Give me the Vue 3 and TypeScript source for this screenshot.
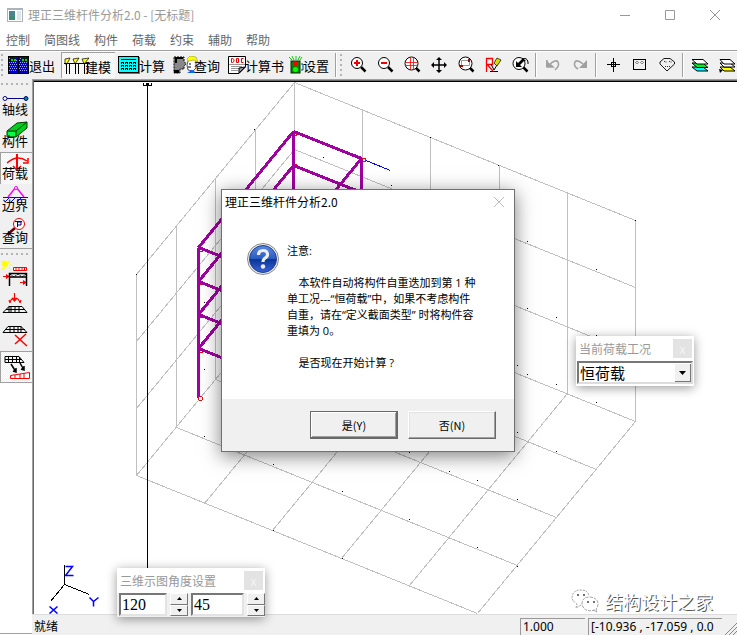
<script setup lang="ts">
import { ref } from 'vue'

type Point = [number, number]
interface Segment { x1: number; y1: number; x2: number; y2: number }

const loadCase = ref('恒荷载')
const angleA = ref(120)
const angleB = ref(45)
const dialogOpen = ref(true)
const menus = ['控制', '简图线', '构件', '荷载', '约束', '辅助', '帮助']

/* Projected box of the axis grid: origin corner plus three edge vectors. */
const origin: Point = [294, 82]
const right: Point = [341, 138]
const left: Point = [-158, 192]
const drop = 201

function seg(a: Point, b: Point): Segment {
  return { x1: a[0], y1: a[1], x2: b[0], y2: b[1] }
}
function at(u: number, v: number, w: number): Point {
  return [
    Math.round(origin[0] + right[0] * u + left[0] * v),
    Math.round(origin[1] + right[1] * u + left[1] * v + drop * w),
  ]
}

const grid: Segment[] = []
for (let i = 0; i <= 5; i++) {
  grid.push(seg(at(i / 5, 0, 0), at(i / 5, 0, 1)), seg(at(i / 5, 0, 1), at(i / 5, 1, 1)))
}
for (let j = 0; j <= 4; j++) {
  grid.push(seg(at(0, j / 4, 0), at(0, j / 4, 1)), seg(at(0, j / 4, 1), at(1, j / 4, 1)))
}
for (let k = 0; k < 3; k++) {
  grid.push(seg(at(0, 0, k / 3), at(1, 0, k / 3)), seg(at(0, 0, k / 3), at(0, 1, k / 3)))
}

const backCol: Point = [293, 131]
const rightCol: Point = [361, 158]
const leftCol: Point = [198, 247]
const frontCol: Point = [266, 274]
const down = (p: Point, d: number): Point => [p[0], p[1] + d]
const frame: Segment[] = [backCol, rightCol, leftCol, frontCol].map(p => seg(p, down(p, 150)))
for (const d of [0, 34, 67, 101]) {
  frame.push(
    seg(down(backCol, d), down(rightCol, d)),
    seg(down(backCol, d), down(leftCol, d)),
    seg(down(leftCol, d), down(frontCol, d)),
    seg(down(rightCol, d), down(frontCol, d)),
  )
}

const dots: Point[] = [
  [254, 129], [323, 157], [391, 185], [430, 137], [498, 165], [635, 220], [527, 241], [596, 269],
  [527, 308], [556, 317], [596, 335], [517, 365], [527, 374], [556, 384], [596, 402], [517, 432],
  [556, 451], [409, 452], [449, 471], [477, 480], [517, 499], [409, 519], [342, 491], [273, 464],
  [204, 436], [204, 369], [204, 302], [477, 547], [517, 566], [273, 530], [342, 558], [136, 274],
]
const joints: Point[] = [[200, 249], [200, 282], [200, 315], [200, 350], [294, 133], [294, 165], [363, 159]]

const message = `    本软件自动将构件自重迭加到第 1 种
单工况---“恒荷载”中，如果不考虑构件
自重，请在“定义截面类型” 时将构件容
重填为 0。

    是否现在开始计算 ?`
</script>

<template>
  <div class="window">
    <header class="titlebar">
      <svg class="app-icon" width="16" height="14" viewBox="0 0 16 14" shape-rendering="crispEdges">
        <rect x="0" y="0" width="16" height="14" fill="#a9b5bb" />
        <rect x="1" y="2" width="14" height="11" fill="#fff" />
        <rect x="2" y="3" width="6" height="9" fill="#4d8290" />
        <rect x="2" y="8" width="6" height="4" fill="#3f8a70" />
        <rect x="10" y="3" width="4" height="9" fill="#dfe6ea" />
      </svg>
      <h1>理正三维杆件分析2.0 - [无标题]</h1>
      <button class="win-btn" aria-label="最小化"><svg width="12" height="12"><path d="M1 6.500H11" /></svg></button>
      <button class="win-btn" aria-label="最大化"><svg width="12" height="12"><path d="M1.500 1.500H10.500V10.500H1.500Z" /></svg></button>
      <button class="win-btn" aria-label="关闭"><svg width="12" height="12"><path d="M1 1L11 11M11 1L1 11" /></svg></button>
    </header>
    <nav class="menu">
      <a v-for="m in menus" :key="m" href="#">{{ m }}</a>
    </nav>

    <div class="toolbar">
      <i class="grip" />
      <div class="modes">
        <button class="mode">
          <svg width="22" height="18" shape-rendering="crispEdges">
            <rect width="21" height="18" fill="#0000c8" />
            <path d="M1 2.500h8M2 4.500h8M1 6.500h8M2 8.500h8M1 10.500h8M2 12.500h8M1 14.500h8M12 2.500h8M11 4.500h8M12 6.500h8M11 8.500h8M12 10.500h8M11 12.500h8M12 14.500h8" stroke="#a0a0ff" stroke-dasharray="1 1" />
            <path d="M2 2h6v4h-6zM13 2h6v4h-6z" fill="#002020" />
            <path d="M3 4h2M6 4h2M14 4h2M17 4h2" stroke="#0d0" stroke-width="2" />
            <path d="M10.500 0V18M.5 .5H20.500V17.500H.5Z" stroke="#000" fill="none" />
          </svg><span>退出</span>
        </button>
        <button class="mode pressed overlap">
          <svg width="26" height="18">
            <path d="M1 2L6 1L3 7L1 7ZM9 2L15 1L11 7ZM18 2L25 1L20 7Z" fill="#ff0" stroke="#000" stroke-width=".7" />
            <path d="M2.500 6V17M5.500 6V17M11.500 6V17M14.500 6V17M20.500 6V17M23.500 6V17M0 6.500H26" stroke="#000" shape-rendering="crispEdges" />
          </svg><span>建模</span>
        </button>
        <button class="mode close">
          <svg width="24" height="18" shape-rendering="crispEdges">
            <path d="M.5 .5H20.500V16.500H.5Z" fill="#0ff" stroke="#000" />
            <path d="M21.500 1V17.500H1" stroke="#00a0a8" fill="none" />
            <path d="M3 3.500H18" stroke="#000" />
            <path d="M3 7H18M3 10H18M3 13H18" stroke="#000" stroke-width="2" stroke-dasharray="3 1" />
            <path d="M4 7H18M4 10H18M4 13H18" stroke="#0ff" stroke-dasharray="1 3" />
          </svg><span>计算</span>
        </button>
        <button class="mode overlap">
          <svg width="26" height="18">
            <path d="M1 1H11V5L13 8L11 10V13H7V17H1Z" fill="#888" stroke="#000" stroke-dasharray="2 1" />
            <path d="M2 1H10V3H4V7H2ZM1 14H6V17H1Z" fill="#000" />
            <path d="M15 5L14 9L15 14L20 15L23 12V5" fill="#fff" stroke="#008" stroke-width=".7" />
            <path d="M14 3L17 0L23 1L25 6L21 4L15 5Z" fill="#ff0" stroke="#880" stroke-width=".5" />
            <path d="M16 8H18M15 11H18" stroke="#000" />
            <path d="M14 17L19 14L24 17" fill="#06f" />
          </svg><span>查询</span>
        </button>
        <button class="mode wide close">
          <svg width="20" height="18">
            <path d="M.5 .5H17.500V11L11 17.500H.5Z" fill="#fff" stroke="#000" />
            <path d="M3.500 2.500V6.500H4.500L6 5.500V3.500L4.500 2.500ZM8.500 2.500H10.500V6.500H8.500ZM15.500 2.500H13.500V6.500H15.500" fill="none" stroke="#e00" />
            <path d="M1 8.500H17M3 10.500H14M3 12.500H12M3 14.500H10" stroke="#999" shape-rendering="crispEdges" />
            <path d="M17 11L11 17V12Z" fill="#999" stroke="#000" />
          </svg><span>计算书</span>
        </button>
        <button class="mode narrow">
          <svg width="15" height="18">
            <path d="M3 4L0 1M5 4L3 0M7 4V0M9 4L11 0M11 4L13 1" stroke="#0c0" />
            <rect x="2" y="5" width="9" height="12" fill="#080" stroke="#003000" />
            <circle cx="6.500" cy="8" r="2.500" fill="#f00" /><circle cx="6.500" cy="13.500" r="2.500" fill="#0f0" />
            <path d="M12 8H14V14H12" stroke="#048" fill="none" />
          </svg><span>设置</span>
        </button>
      </div>
      <i class="sep" />
      <i class="grip second" />
      <div class="tools">
        <button aria-label="放大"><svg width="20" height="20"><path d="M13 12L17.500 16.500" stroke="#000" stroke-width="2.500" /><circle cx="9" cy="8" r="5.500" fill="#fff" stroke="#000" /><path d="M6 8H12M9 5V11" stroke="#e00" stroke-width="2" /></svg></button>
        <button aria-label="缩小"><svg width="20" height="20"><path d="M13 12L17.500 16.500" stroke="#000" stroke-width="2.500" /><circle cx="9" cy="8" r="5.500" fill="#fff" stroke="#000" /><path d="M6 8H12" stroke="#e00" stroke-width="2" /></svg></button>
        <button aria-label="全图"><svg width="20" height="20"><path d="M14 13L17.500 16.500" stroke="#000" stroke-width="2.500" /><circle cx="9.500" cy="8.500" r="6.500" fill="#fff" stroke="#000" /><path d="M3 7.500H16M3 10.500H16M8.500 2V15M11.500 2V15" stroke="#f00" stroke-width=".8" /></svg></button>
        <button aria-label="平移"><svg width="20" height="20"><path d="M10 3V17M3 10H17" stroke="#000" stroke-width="1.500" /><path d="M10 2L13 5H7ZM10 18L13 15H7ZM2 10L5 7V13ZM18 10L15 7V13Z" /></svg></button>
        <button aria-label="窗口缩放"><svg width="20" height="20"><path d="M14 13L17.500 16.500" stroke="#000" stroke-width="2.500" /><circle cx="9.500" cy="8.500" r="6.500" fill="#fff" stroke="#000" /><path d="M5.500 5.500H13.500V10.500H5.500Z" fill="none" stroke="#999" /><path d="M4 10H7V12H4ZM12 4H14V7H12Z" fill="#a00" /></svg></button>
        <button aria-label="重画"><svg width="20" height="20"><path d="M3.500 17V3.500H9.500V9.500H4L10 16" fill="none" stroke="#f00" stroke-width="1.300" /><path d="M8 9L11 15L17 5" stroke="#000" fill="none" /><path d="M11 8L14 3L18 5L14 11Z" fill="#dd0" stroke="#000" stroke-width=".7" /><path d="M7 16.500H15" stroke="#000" /></svg></button>
        <button aria-label="上一视图"><svg width="20" height="20"><path d="M13 12L17.500 16.500" stroke="#000" stroke-width="2.500" /><circle cx="9" cy="8.500" r="6" fill="#fff" stroke="#000" /><path d="M6 6V12H12L10 10L14 6H16L13 3L8 8Z" /><path d="M12 4Q17 2 18 7V9" fill="none" stroke="#000" /></svg></button>
        <i class="sep" />
        <button aria-label="撤销"><svg width="20" height="20"><path d="M4 5V12H10L7 9Q13 4 15 7Q17 11 12 15" fill="none" stroke="#a0a0a0" stroke-width="1.500" /><path d="M3 5V12H10Z" fill="#a0a0a0" /></svg></button>
        <button aria-label="重做"><svg width="20" height="20"><path d="M13 9Q7 4 5 7Q3 11 8 14" fill="none" stroke="#a0a0a0" stroke-width="1.500" /><path d="M17 5V13H9Z" fill="#a0a0a0" /></svg></button>
        <i class="sep" />
        <button aria-label="捕捉点"><svg width="20" height="20" shape-rendering="crispEdges"><path d="M10.500 3V17M4 9.500H17M8.500 7.500H12.500V11.500H8.500Z" fill="none" stroke="#000" /></svg></button>
        <button aria-label="平面"><svg width="20" height="20" shape-rendering="crispEdges"><path d="M3.500 4.500H15.500V14.500H3.500Z" fill="none" stroke="#000" /><path d="M6 6.500H8M5.500 7V8M8.500 7V8M6 8.500H8M11 6.500H13M10.500 7V8M13.500 7V8M11 8.500H13" fill="none" stroke="#888" /></svg></button>
        <button aria-label="多边形"><svg width="20" height="20"><path d="M3 7L7 3.500H13L17.500 7V9L10 16L3 9Z" fill="none" stroke="#000" stroke-width=".9" /><path d="M7 6.500H9V8M12 6.500H14V8M8 11.500H13" fill="none" stroke="#333" stroke-dasharray="1 1" /></svg></button>
        <i class="sep" />
        <button aria-label="图层"><svg width="20" height="20"><path d="M2 12L13 12L18 16H7Z" fill="#0ff" stroke="#000" /><path d="M2 8L13 8L18 12.500H7Z" fill="#0e2" stroke="#000" /><path d="M2 4.500H13L18 9H7Z" fill="#fff" stroke="#000" /></svg></button>
        <button aria-label="图层设置"><svg width="20" height="20"><path d="M3 12L13 12L18 16H7Z" fill="#ff0" stroke="#000" /><path d="M3 8L13 8L18 12H7Z" fill="#fff" stroke="#000" /><path d="M3 4.500H13L18 9H7Z" fill="#fff" stroke="#000" /><path d="M3 18L2 14L6 15Z" /></svg></button>
      </div>
    </div>

    <main class="workspace">
      <aside class="side">
        <div class="side-group">
          <i class="hgrip" />
          <button class="side-btn"><svg width="28" height="18"><path d="M5 9.500H24" stroke="#008" /><circle cx="4" cy="9.500" r="2" fill="#fff" stroke="#008" /><circle cx="25" cy="9.500" r="2" fill="#088" stroke="#008" /></svg><span>轴线</span></button>
          <button class="side-btn"><svg width="28" height="18"><path d="M6 10L16 2L26 1V7L15 16H6Z" fill="#0c2" stroke="#004000" /><path d="M6 10H15V16M15 10L26 1" fill="none" stroke="#004000" /><path d="M7 11H14V15H7Z" fill="#0f4" /></svg><span>构件</span></button>
          <button class="side-btn pressed"><svg width="28" height="18"><path d="M16 1V17" stroke="#f00" stroke-width="2" /><path d="M6 10Q16 1 26 8M22 10L27 10V5M12 13L16 17L20 13" fill="none" stroke="#f00" stroke-width="1.500" /></svg><span>荷载</span></button>
          <button class="side-btn"><svg width="28" height="18"><path d="M15 2L7 12M15 2L23 12" stroke="#f0f" stroke-width="1.500" /><circle cx="15" cy="3" r="1.500" fill="#fff" stroke="#f0f" /><path d="M2 12.500H27M4 17L8 13M10 17L14 13M16 17L20 13" stroke="#00f" /></svg><span>边界</span></button>
          <button class="side-btn"><svg width="28" height="18"><path d="M14 11L7 17" stroke="#600" stroke-width="2.500" /><circle cx="18" cy="7" r="5.500" fill="#fff" stroke="#e00" /><path d="M14 4.500H21M16.500 4V10M16 5H20V8H16" fill="none" stroke="#008" /></svg><span>查询</span></button>
        </div>
        <div class="side-group">
          <i class="hgrip" />
          <button class="side-icon" aria-label="节点荷载"><svg width="28" height="28"><path d="M4 0V4M9 1L7 3M0 2H3M8 5H11M8 8L10 10M4 7V10M0 10L3 7" stroke="#ff0" /><circle cx="4" cy="4" r="3" fill="#ff0" /><path d="M12.500 7.500H25.500V10.500H12.500ZM15 8V10M18 8V10M21 8V10M23.500 8V10" fill="#fff" stroke="#f00" /><path d="M2 16.500H8M19 22.500H25" stroke="#f00" /><path d="M5 14L9 16.500L5 19ZM22 20L26 22.500L22 25Z" fill="#f00" /><path d="M8.500 26V13.500H25.500V26M8 17H26" fill="none" stroke="#000" stroke-width="1.500" /><path d="M9 14L13 17L17 14L21 17L25 14" fill="none" stroke="#000" stroke-dasharray="2 1" /></svg></button>
          <button class="side-icon" aria-label="面荷载"><svg width="28" height="28"><path d="M13.500 2V10M9 12Q10 7 13.500 7Q18 7 19 12M11 7L13.500 10L16 7M8 9L9 12M20 9L19 12" fill="none" stroke="#f00" stroke-width="1.200" /><path d="M8 15.500H21L26 21.500H2ZM5 18.500H24M10 15V21M14 15V21M18 15V21M8 15V21" fill="none" stroke="#000" /></svg></button>
          <button class="side-icon" aria-label="删除荷载"><svg width="28" height="28"><path d="M7 4.500H20L26 10.500H2ZM5 7.500H24M9 4V10M13 4V10M17 4V10M20 4V10" fill="none" stroke="#000" /><path d="M14 13L26 24M25 12L14 22" stroke="#f00" stroke-width="1.500" /></svg></button>
          <button class="side-icon pressed" aria-label="荷载显示"><svg width="28" height="28"><path d="M3 3.500H17L22 9.500H3ZM6.500 3V9M10.500 3V9M14.500 3V9M17.500 4V9M3 6.500H20" fill="none" stroke="#000" /><path d="M9 11L14 19M18 10L22 17M11 18L14 19L14 15M19 16L22 17L22 13" fill="none" stroke="#000" stroke-width="1.500" /><path d="M8.500 25.500V22.500L27.500 19.500V25.500ZM13 25V22M18 25V21M22 25V20" fill="#fff" stroke="#f00" /></svg></button>
        </div>
      </aside>

      <section class="stage">
        <div class="canvas">
          <svg class="scene" shape-rendering="crispEdges">
            <g transform="translate(-33.5 -80.5)">
              <path d="M33 81H3000" stroke="#000" />
              <line v-for="(g, i) in grid" :key="'g' + i" v-bind="g" stroke="#c0c0c0" />
              <rect v-for="(d, i) in dots" :key="'d' + i" :x="d[0] - 0.5" :y="d[1] - 0.5" width="1" height="1" />
              <path d="M363 159L390 170" stroke="#00f" />
              <rect v-for="(j, i) in joints" :key="'j' + i" :x="j[0] - 1" :y="j[1] - 1" width="3" height="3" fill="#fff" stroke="#f00" />
              <line v-for="(f, i) in frame" :key="'f' + i" v-bind="f" stroke="#a000a0" stroke-width="3" />
              <circle cx="200" cy="398" r="2" fill="#fff" stroke="#f00" />
              <path d="M147 82V640M143 82V85H146V82M148 82V85H151V82" fill="none" stroke="#000" />
              <path d="M64 564V584L50 601M64 584L89 594" fill="none" stroke="#000" />
              <path d="M65 566H72L65 575H73M49 606L57 613M57 606L49 613M89 597L93 601L98 597M93 601V606" fill="none" stroke="#00f" stroke-width="1.500" shape-rendering="auto" />
            </g>
          </svg>

          <form class="palette load">
            <div class="palette-head"><label for="load-case">当前荷载工况</label><button type="button" aria-label="关闭">x</button></div>
            <div class="combo">
              <select id="load-case" v-model="loadCase"><option>恒荷载</option><option>活荷载</option></select>
              <svg width="17" height="19"><path d="M5 8H12L8.500 12Z" /></svg>
            </div>
          </form>

          <form class="palette angle">
            <div class="palette-head"><label for="angle-a">三维示图角度设置</label><button type="button" aria-label="关闭">x</button></div>
            <div class="fields">
              <input id="angle-a" v-model="angleA" type="text">
              <div class="spin">
                <button type="button" aria-label="增加第一角度" @click="angleA++"><svg width="5" height="3"><path d="M0 3H5L2.500 0Z" /></svg></button>
                <button type="button" aria-label="减少第一角度" @click="angleA--"><svg width="5" height="3"><path d="M0 0H5L2.500 3Z" /></svg></button>
              </div>
              <input v-model="angleB" class="second-angle" type="text" aria-label="第二角度">
              <div class="spin">
                <button type="button" aria-label="增加第二角度" @click="angleB++"><svg width="5" height="3"><path d="M0 3H5L2.500 0Z" /></svg></button>
                <button type="button" aria-label="减少第二角度" @click="angleB--"><svg width="5" height="3"><path d="M0 0H5L2.500 3Z" /></svg></button>
              </div>
            </div>
          </form>

          <div class="brand">
            <svg width="28" height="24" fill="none" stroke="#888" stroke-width=".8">
              <path d="M10 16L5 19L6 15Q1 12 1 8Q2 1 10 1Q17 1 18 7" stroke-dasharray="2 1" />
              <path d="M24 21Q13 24 11 15Q11 8 19 8Q27 9 27 15Q27 18 25 20L26 23L22 21" stroke-dasharray="3 1" />
              <path d="M6 6H8M12 6H14M16 13H18M22 13H24" stroke="#444" stroke-width="1.500" />
            </svg>
            <span>结构设计之家</span>
          </div>

          <div v-if="dialogOpen" class="dialog" role="dialog" aria-labelledby="dlg-title">
            <div class="dialog-head">
              <h2 id="dlg-title">理正三维杆件分析2.0</h2>
              <button aria-label="关闭对话框" @click="dialogOpen = false"><svg width="12" height="12"><path d="M1 1L11 11M11 1L1 11" stroke="#bbb" /></svg></button>
            </div>
            <div class="dialog-body">
              <svg width="32" height="32" viewBox="0 0 32 32">
                <defs><linearGradient id="ball" x2="0" y2="1"><stop offset="0" stop-color="#5c8ae0" /><stop offset=".48" stop-color="#2a5cc4" /><stop offset=".52" stop-color="#0b3595" /><stop offset="1" stop-color="#3a62dd" /></linearGradient></defs>
                <circle cx="16" cy="16" r="15.500" fill="#eee" stroke="#888" />
                <circle cx="16" cy="16" r="13.500" fill="url(#ball)" stroke="#1b3e90" />
                <path d="M11.500 12Q11.500 7.500 16 7.500Q20.500 7.500 20.500 11.500Q20.500 14 17.500 15.500Q16 16.500 16 19" fill="none" stroke="#eee" stroke-width="3.200" />
                <circle cx="16" cy="23.500" r="2.200" fill="#eee" />
              </svg>
              <div class="message"><p>注意:</p><p>{{ message }}</p></div>
            </div>
            <div class="dialog-foot">
              <button class="primary" @click="dialogOpen = false">是(Y)</button>
              <button @click="dialogOpen = false">否(N)</button>
            </div>
          </div>
        </div>

        <footer class="status">
          <span class="ready">就绪</span>
          <span class="cell scale">1.000</span>
          <span class="cell coords">[-10.936 , -17.059 , 0.0</span>
          <svg width="12" height="14"><path d="M0 14L12 2M4 14L12 6M8 14L12 10" stroke="#888" /></svg>
        </footer>
      </section>
    </main>
  </div>
</template>

<style>
body { background: #fff; }
</style>

<style scoped>
.window {
  display: flex;
  flex-direction: column;
  height: 100vh;
  overflow: hidden;
  background: #fff;
  color: #000;
  font: 12px/16px "Noto Sans CJK SC", sans-serif;
}
.window * { box-sizing: border-box; }
button, input, select { font: inherit; color: inherit; margin: 0; padding: 0; border: 0; border-radius: 0; background: none; }
svg { display: block; flex: none; }
h1, h2, p { margin: 0; font-size: inherit; font-weight: 400; }
.titlebar { display: flex; align-items: center; height: 29px; flex: none; padding-left: 7px; color: #999; }
.titlebar h1 { flex: 1; margin-left: 5px; white-space: nowrap; }
.win-btn { display: grid; place-items: center; width: 45px; height: 28px; }
.win-btn svg { fill: none; stroke: #999; }
.menu { display: flex; gap: 14px; height: 21px; flex: none; padding-left: 6px; line-height: 22px; }
.menu a { color: #666; text-decoration: none; }

.toolbar { display: flex; align-items: center; height: 29px; flex: none; overflow: hidden; border-top: 1px solid #a0a0a0; background: #f0f0f0; box-shadow: inset 0 1px #fff; }
.grip { flex: none; width: 2px; height: 22px; margin-left: 1px; margin-right: 3px; background: repeating-linear-gradient(#b4b4b4 0 2px, #f0f0f0 2px 5px); }
.grip.second { margin-left: 3px; margin-right: 2px; }
.modes { display: flex; gap: 1px; flex: none; }
.mode { display: flex; align-items: center; width: 54px; height: 26px; padding-left: 2px; font-size: 13px; line-height: 18px; white-space: nowrap; }
.mode.wide { width: 60px; }
.mode.narrow { width: 46px; }
.mode span { margin-left: -1px; margin-top: 2px; }
.mode.overlap span { margin-left: -5px; }
.mode.close span { margin-left: -3px; }
.pressed { border-top: 1px solid #a0a0a0; border-left: 1px solid #a0a0a0; background: repeating-conic-gradient(#fff 0 25%, #f0f0f0 0 50%) 0 0 / 2px 2px; }
.sep { flex: none; width: 2px; height: 24px; border-left: 1px solid #a0a0a0; background: #fff; }
.modes + .sep { margin-left: 2px; }
.tools { display: flex; align-items: center; flex: none; }
.tools .sep { margin: 0 2px; }
.tools button { display: grid; place-items: center; width: 27px; height: 26px; }

.workspace { display: grid; grid-template-columns: 32px 1fr; flex: 1; min-height: 0; }
.side { border-bottom: 1px solid #a0a0a0; margin-bottom: 1px; }
.side-group { display: flex; flex-direction: column; align-items: stretch; border-bottom: 1px solid #a0a0a0; background: #f0f0f0; padding-top: 4px; }
.hgrip { width: 30px; height: 2px; margin: 0 0 3px 1px; background: repeating-linear-gradient(90deg, #b4b4b4 0 2px, #f0f0f0 2px 5px); }
.side-btn { display: flex; flex-direction: column; align-items: flex-start; height: 32px; padding: 1px 0 0 1px; font-size: 13px; line-height: 18px; }
.side-btn.pressed { padding: 0; }
.side-btn span { margin-top: -7px; margin-left: 1px; }
.side-icon { height: 31px; padding: 1px; }

.stage { display: flex; flex-direction: column; min-width: 0; min-height: 0; }
.canvas { position: relative; flex: 1; min-height: 0; border-top: 1px solid #a0a0a0; border-left: 1px solid #a0a0a0; box-shadow: inset 1px 1px #696969; padding: 1px 0 0 1px; }
.scene { width: 100%; height: 100%; }

.palette { position: absolute; z-index: 2; padding: 2px; background: #fff; box-shadow: 0 2px 10px rgba(0, 0, 0, .4); }
.load { top: 256px; right: 43px; width: 118px; }
.angle { left: 84px; bottom: -3px; width: 148px; }
.palette-head { display: flex; align-items: center; justify-content: space-between; height: 21px; color: #999; }
.palette-head label { padding-left: 1px; white-space: nowrap; }
.palette-head button { width: 19px; height: 19px; background: #e3e3e3; color: #f4f4f4; line-height: 16px; }
.combo { display: grid; margin: 2px -1px 0; border: 2px solid; border-color: #777 #ddd #ddd #777; background: #fff; }
.combo select, .combo svg { grid-area: 1 / 1; }
.combo select { width: 100%; height: 19px; padding-left: 1px; appearance: none; font-size: 15px; line-height: 19px; outline: 0; }
.combo svg { justify-self: end; align-self: center; pointer-events: none; background: #f0f0f0; box-shadow: inset 1px 1px #fff, inset -1px -1px #777; }
.fields { display: flex; gap: 3px; margin: 2px -2px -2px; padding: 0 0 1px 2px; background: #f0f0f0; }
.fields input { width: 48px; height: 23px; padding-left: 1px; border: 2px solid; border-color: #777 #e3e3e3 #e3e3e3 #777; background: #fff; font: 16px/18px "Liberation Serif", serif; }
.fields .second-angle { flex: 1; min-width: 0; }
.spin { display: grid; grid-template-rows: 1fr 1fr; width: 18px; }
.spin button { display: grid; place-items: center; border: 1px solid; border-color: #fff #777 #777 #fff; }

.brand { position: absolute; right: 24px; bottom: 1px; display: flex; align-items: center; gap: 6px; font-size: 18px; line-height: 24px; color: #fff; text-shadow: 1px 1px 0 #555; }

.dialog { position: absolute; z-index: 3; top: 109px; left: 188px; width: 294px; border: 1px solid #707070; background: #fff; box-shadow: 0 4px 18px rgba(0, 0, 0, .5); }
.dialog-head { display: flex; align-items: center; justify-content: space-between; height: 24px; padding: 0 9px 0 3px; }
.dialog-body { display: flex; gap: 8px; height: 185px; padding: 29px 24px 0 25px; }
.message { display: flex; flex-direction: column; gap: 16px; font: 11px/16px "Open Sans", "Noto Sans CJK SC", sans-serif; white-space: pre; }
.dialog-foot { display: flex; justify-content: flex-end; gap: 10px; padding: 12px 18px; background: #f0f0f0; }
.dialog-foot button { width: 88px; height: 28px; border: 1px solid; border-color: #fff #696969 #696969 #fff; box-shadow: inset -1px -1px #a0a0a0, inset 1px 1px #e3e3e3; font-size: 11px; line-height: 24px; }
.dialog-foot .primary { border-color: #696969; box-shadow: inset -1px -1px #696969, inset 1px 1px #fff, inset -2px -2px #a0a0a0; }

.status { display: flex; align-items: flex-end; gap: 3px; height: 21px; flex: none; border-top: 1px solid #ddd; background: #f0f0f0; }
.ready { flex: 1; padding: 0 0 1px 2px; }
.cell { height: 17px; padding-left: 2px; overflow: hidden; border-top: 1px solid #999; border-left: 1px solid #999; font-family: "Noto Sans", sans-serif; white-space: nowrap; }
.scale { width: 65px; }
.coords { width: 134px; }
</style>
